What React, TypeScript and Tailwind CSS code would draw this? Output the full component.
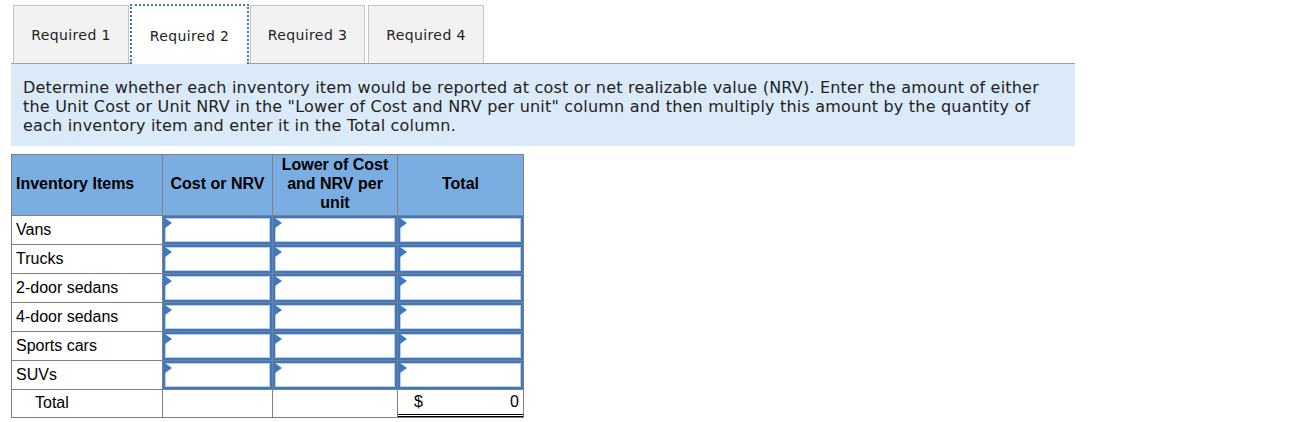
import React from "react";

const rows = ["Vans", "Trucks", "2-door sedans", "4-door sedans", "Sports cars", "SUVs"];

function InputCell() {
  return (
    <td className="border border-[#808080] p-0 h-[29px] align-top">
      <div className="relative h-[28px] border-2 border-[#3f78c0] shadow-[inset_0_0_0_1px_#b6d0f0] bg-white">
        <div className="absolute left-0 top-0 w-0 h-0 border-t-[5px] border-b-[5px] border-l-[7px] border-t-transparent border-b-transparent border-l-[#3f78c0]" />
      </div>
    </td>
  );
}

export default function App() {
  return (
    <div className="w-[1290px] h-[422px] bg-white font-['DejaVu_Sans',Verdana,sans-serif] text-[#222]">
      <div className="pl-[11px] pt-[4px]">
        <div className="flex items-end pl-[2px] text-[14px] tracking-[0.4px]">
          <div className="w-[116px] h-[58px] pt-[2px] flex items-center justify-center bg-[#f2f2f2] border border-[#c6c6c6] border-b-0">
            Required 1
          </div>
          <div className="ml-[1px] w-[119px] h-[60px] pt-[3px] flex items-center justify-center bg-white border-2 border-dotted border-[#3f78c0] border-b-0 relative z-10 -mb-px">
            Required 2
          </div>
          <div className="ml-[1px] w-[115px] h-[58px] pt-[2px] flex items-center justify-center bg-[#f2f2f2] border border-[#c6c6c6] border-b-0">
            Required 3
          </div>
          <div className="ml-[3px] w-[116px] h-[58px] pt-[2px] flex items-center justify-center bg-[#f2f2f2] border border-[#c6c6c6] border-b-0">
            Required 4
          </div>
        </div>
        <div className="w-[1064px] border-t border-[#a0a0a0] bg-[#daeaf8] pl-[12px] pr-[18px] pt-[14px] pb-[11px] text-[16px] tracking-[0.2px] leading-[19px]">
          Determine whether each inventory item would be reported at cost or net realizable value (NRV). Enter the amount of either the Unit Cost or Unit NRV in the "Lower of Cost and NRV per unit" column and then multiply this amount by the quantity of each inventory item and enter it in the Total column.
        </div>
        <table className="mt-[8px] border-collapse font-['Liberation_Sans',Arial,sans-serif] text-[16px] text-black">
          <thead>
            <tr className="bg-[#7aaee3] h-[61px]">
              <th className="border border-[#808080] w-[151px] text-left font-bold pl-[4px] leading-[19px] pb-[3px]">Inventory Items</th>
              <th className="border border-[#808080] w-[110px] text-center font-bold leading-[19px] pb-[3px]">Cost or NRV</th>
              <th className="border border-[#808080] w-[125px] text-center font-bold leading-[19px] px-[8px] pb-[3px]">Lower of Cost and NRV per unit</th>
              <th className="border border-[#808080] w-[126px] text-center font-bold leading-[19px] pb-[3px]">Total</th>
            </tr>
          </thead>
          <tbody>
            {rows.map((r) => (
              <tr key={r} className="h-[29px]">
                <td className="border border-[#808080] pl-[4px] leading-[19px] pb-[2px]">{r}</td>
                <InputCell />
                <InputCell />
                <InputCell />
              </tr>
            ))}
            <tr className="h-[27px]">
              <td className="border border-[#808080] pl-[23px] pb-[1px]">Total</td>
              <td className="border border-[#808080]"></td>
              <td className="border border-[#808080]"></td>
              <td className="border border-[#808080] p-0">
                <div className="flex justify-between px-[4px] border-b-[3px] border-double border-black h-[27px] items-center">
                  <span className="pl-[12px]">$</span>
                  <span>0</span>
                </div>
              </td>
            </tr>
          </tbody>
        </table>
      </div>
    </div>
  );
}
